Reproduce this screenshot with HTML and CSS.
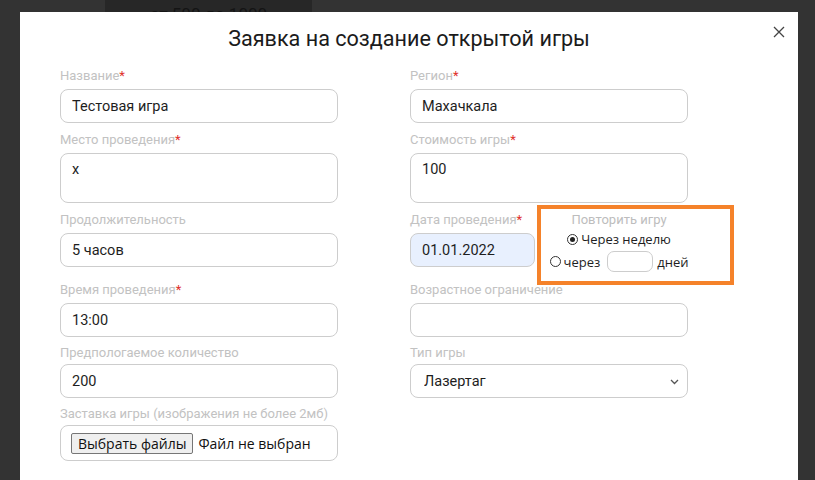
FILE: index.html
```html
<!DOCTYPE html>
<html lang="ru">
<head>
    <meta charset="utf-8">
    <title>Заявка на создание открытой игры</title>
    <link rel="stylesheet" href="styles.css">
</head>
<body>

<!-- page underneath the dialog -->
<div class="page">
    <div class="page-top">
        <div class="price-card">от 500 до 1000</div>
    </div>
</div>

<div class="modal">
    <button class="modal-close" type="button">
        <svg width="12" height="12" viewBox="0 0 12 12">
            <path d="M1 1 L11 11 M11 1 L1 11" stroke="#444" stroke-width="1.3" fill="none"/>
        </svg>
    </button>

    <h2 class="modal-title">Заявка на создание открытой игры</h2>

    <form class="game-form">
        <div class="field">
            <label>Название<span class="req">*</span></label>
            <input class="inp" type="text" value="Тестовая игра">
        </div>
        <div class="field">
            <label>Регион<span class="req">*</span></label>
            <input class="inp" type="text" value="Махачкала">
        </div>

        <div class="field">
            <label>Место проведения<span class="req">*</span></label>
            <textarea class="inp area">x</textarea>
        </div>
        <div class="field">
            <label>Стоимость игры<span class="req">*</span></label>
            <textarea class="inp area">100</textarea>
        </div>

        <div class="field">
            <label>Продолжительность</label>
            <input class="inp" type="text" value="5 часов">
        </div>
        <div class="date-row">
            <div class="field date-field">
                <label>Дата проведения<span class="req">*</span></label>
                <input class="inp inp-date" type="text" value="01.01.2022">
            </div>
            <div class="repeat">
                <div class="repeat-title">Повторить игру</div>
                <div class="repeat-line">
                    <span class="radio checked"></span>Через неделю
                </div>
                <div class="repeat-line">
                    <span class="radio"></span>через
                    <input class="days" type="text" value="">
                    дней
                </div>
            </div>
        </div>

        <div class="field">
            <label>Время проведения<span class="req">*</span></label>
            <input class="inp" type="text" value="13:00">
        </div>
        <div class="field">
            <label>Возрастное ограничение</label>
            <input class="inp" type="text" value="">
        </div>

        <div class="field field-tight">
            <label>Предпологаемое количество</label>
            <input class="inp" type="text" value="200">
        </div>
        <div class="field field-tight">
            <label>Тип игры</label>
            <div class="select-wrap">
                <select class="inp sel">
                    <option>Лазертаг</option>
                    <option>Пейнтбол</option>
                </select>
                <svg class="sel-arrow" width="9" height="6" viewBox="0 0 9 6">
                    <path d="M1 1 L4.5 4.5 L8 1" stroke="#555" stroke-width="1.3" fill="none"/>
                </svg>
            </div>
        </div>

        <div class="field field-tight">
            <label>Заставка игры (изображения не более 2мб)</label>
            <div class="inp file-box">
                <span class="file-btn">Выбрать файлы</span>
                <span class="file-name">Файл не выбран</span>
            </div>
        </div>
    </form>
</div>

</body>
</html>
```

FILE: styles.css
```css
html, body {
    margin: 0;
    height: 100%;
}
body {
    background: #333333;
    font-family: Roboto, "Open Sans", Arial, sans-serif;
    overflow: hidden;
}

/* page behind the overlay */
.page-top {
    height: 40px;
    padding-left: 105px;
}
.price-card {
    width: 207px;
    height: 40px;
    background: #272727;
    color: #141414;
    font-size: 17px;
    line-height: 20px;
    padding-top: 4px;
    text-align: center;
    box-sizing: border-box;
}

/* dialog */
.modal {
    position: absolute;
    top: 12px;
    left: 20px;
    width: 778px;
    bottom: -40px;
    background: #fff;
    box-sizing: border-box;
    padding: 0 40px;
}
.modal-close {
    position: absolute;
    top: 14px;
    right: 13px;
    width: 12px;
    height: 12px;
    padding: 0;
    border: 0;
    background: none;
}
.modal-close svg { display: block; }

.modal-title {
    margin: 0;
    padding-top: 12px;
    height: 56px;
    box-sizing: border-box;
    text-align: center;
    font-weight: normal;
    font-size: 21.6px;
    line-height: 30px;
    color: #1b1b1b;
}

.game-form {
    display: grid;
    grid-template-columns: 278px 278px;
    column-gap: 72px;
    row-gap: 9px;
}

.field {
    display: flex;
    flex-direction: column;
}
.field label {
    font-size: 13px;
    line-height: 16px;
    height: 16px;
    color: #c2c2c2;
    margin-bottom: 5px;
}
.field-tight {
    margin-top: -1px;
}
.field-tight label {
    margin-bottom: 3px;
}
.req { color: #e0302a; }

.inp {
    height: 34px;
    box-sizing: border-box;
    border: 1px solid #cdcdcd;
    border-radius: 8px;
    padding: 0 11px;
    font-family: Roboto, "Open Sans", Arial, sans-serif;
    font-size: 14.5px;
    color: #1e1e1e;
    background: #fff;
    outline: none;
}
.area {
    height: 50px;
    padding-top: 6px;
    resize: none;
    line-height: 20px;
}
.inp-date {
    background: #e8f0fe;
}

/* date + repeat block */
.date-row {
    display: flex;
    align-items: flex-start;
}
.date-field {
    width: 125px;
    flex-shrink: 0;
}
.repeat {
    flex-shrink: 0;
    width: 197px;
    height: 80px;
    box-sizing: border-box;
    margin: -7px 0 -12px 2px;
    border: 4px solid #f5822a;
    padding: 3px 37px 0 4px;
    text-align: center;
    font-family: "Open Sans", Arial, sans-serif;
    font-size: 13px;
    color: #1e1e1e;
}
.repeat-title {
    font-family: Roboto, Arial, sans-serif;
    line-height: 16px;
    color: #bdbdbd;
}
.repeat-line {
    display: flex;
    align-items: center;
    justify-content: center;
    line-height: 18px;
    margin-top: 2px;
}
.repeat-line + .repeat-line {
    margin-top: 3px;
}
.radio {
    display: inline-block;
    width: 11px;
    height: 11px;
    box-sizing: border-box;
    border: 1px solid #333;
    border-radius: 50%;
    margin-right: 3px;
    position: relative;
}
.radio.checked::after {
    content: "";
    position: absolute;
    left: 2px;
    top: 2px;
    width: 5px;
    height: 5px;
    border-radius: 50%;
    background: #222;
}
.days {
    width: 46px;
    height: 21px;
    box-sizing: border-box;
    margin: 0 4px 0 7px;
    border: 1px solid #cdcdcd;
    border-radius: 7px;
    outline: none;
}

/* select */
.select-wrap {
    position: relative;
}
.sel {
    width: 100%;
    -webkit-appearance: none;
    appearance: none;
    padding-left: 13px;
}
.sel-arrow {
    position: absolute;
    right: 9px;
    top: 15px;
}

/* file picker */
.file-box {
    height: 36px;
    display: flex;
    align-items: center;
    padding: 0 10px;
}
.file-btn {
    font-family: "Open Sans", Arial, sans-serif;
    font-size: 14px;
    line-height: 19px;
    color: #111;
    background: #efefef;
    border: 1px solid #767676;
    border-radius: 2px;
    padding: 0 6px;
    margin-right: 5px;
}
.file-name {
    font-family: "Open Sans", Arial, sans-serif;
    font-size: 14px;
    color: #111;
}
```
